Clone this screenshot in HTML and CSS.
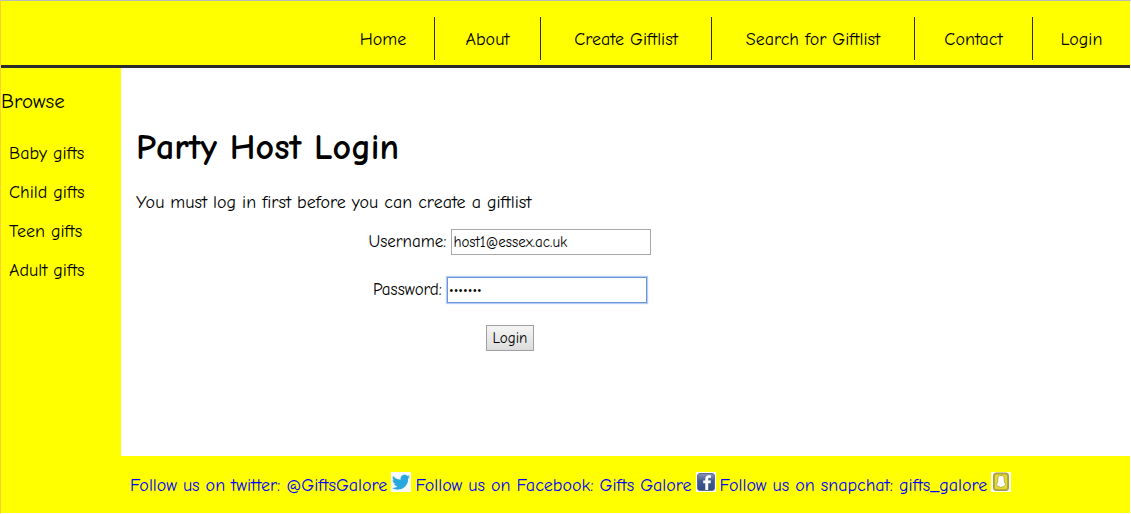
FILE: index.html
```html
<!DOCTYPE html>
<html lang="en">
<head>
<meta charset="utf-8">
<title>Party Host Login</title>
<link rel="stylesheet" href="styles.css">
</head>
<body>
<div class="page">
  <header class="header">
    <nav class="nav">
      <a class="nav-link" href="#">Home</a>
      <a class="nav-link about" href="#">About</a>
      <a class="nav-link create" href="#">Create Giftlist</a>
      <a class="nav-link search" href="#">Search for Giftlist</a>
      <a class="nav-link contact" href="#">Contact</a>
      <a class="nav-link login" href="#">Login</a>
    </nav>
  </header>
  <div class="body">
    <aside class="sidebar">
      <h2 class="sidebar-title">Browse</h2>
      <nav class="categories">
        <a class="category" href="#">Baby gifts</a>
        <a class="category" href="#">Child gifts</a>
        <a class="category" href="#">Teen gifts</a>
        <a class="category" href="#">Adult gifts</a>
      </nav>
    </aside>
    <div class="column">
      <main class="main">
        <h1 class="title">Party Host Login</h1>
        <p class="intro">You must log in first before you can create a giftlist</p>
        <form class="form">
          <div class="field">
            <label for="username">Username:</label>
            <input class="input" id="username" type="text" value="host1@essex.ac.uk">
          </div>
          <div class="field">
            <label for="password">Password:</label>
            <input class="input input-active" id="password" type="password" value="giftbox">
          </div>
          <button class="submit" type="button">Login</button>
        </form>
      </main>
      <footer class="footer">
        <a class="social" href="#">Follow us on twitter: @GiftsGalore</a>
        <svg class="icon" viewBox="0 0 20 20" aria-hidden="true">
          <rect width="20" height="20" fill="#f7f9fa"/>
          <path fill="#27a9e0" d="M2 4c2 2.300 4.500 3.500 7.600 3.700C9.200 5 11 2.800 13.500 2.800c1.200 0 2.100.5 2.800 1.200l2.300-.9-1.400 2 1.900-.5-1.900 2c.2 6-4.200 11-10.200 11-2.200 0-4.200-.6-5.800-1.700 2 .2 4-.4 5.300-1.600-1.700 0-3-1-3.500-2.500h1.600C2.800 11.300 1.600 9.900 1.600 8l1.700.5C1.700 7.300 1.200 5.600 2 4z"/>
        </svg>
        <a class="social" href="#">Follow us on Facebook: Gifts Galore</a>
        <svg class="icon" viewBox="0 0 20 20" aria-hidden="true">
          <defs><linearGradient id="fb" x1="0" y1="0" x2="0" y2="1"><stop offset="0" stop-color="#8995b4"/><stop offset=".45" stop-color="#42598f"/><stop offset="1" stop-color="#314c88"/></linearGradient></defs>
          <rect width="20" height="20" fill="#fff"/>
          <rect x="1.500" y="1.500" width="17" height="17" rx="2.500" fill="url(#fb)" stroke="#5a6c96"/>
          <path fill="#fff" d="M9.300 18v-6.800H7.200V8.600h2.100V7c0-2.500 1.300-3.700 3.500-3.700.9 0 1.600.1 2.200.2v2.300h-1.300c-1.200 0-1.500.5-1.500 1.300v1.500H15l-.4 2.600h-2.400V18z"/>
        </svg>
        <a class="social" href="#">Follow us on snapchat: gifts_galore</a>
        <svg class="icon" viewBox="0 0 20 20" aria-hidden="true">
          <rect width="20" height="20" fill="#fffef0"/>
          <rect x="2.500" y="1" width="15" height="17.500" rx="2.500" fill="#b5aa35" stroke="#a39d55"/>
          <rect x="4" y="2.500" width="12" height="14.500" rx="1.500" fill="#e3da2a"/>
          <path fill="#fff" stroke="#8f8a38" stroke-width=".6" d="M10 3.500c2.200 0 3.200 1.500 3.200 3.400 0 2.600.2 4.300 1.600 5.600-.1.800-1 1-1.400 1.400-.2.700-1.200.5-1.700.7-.5.300-.9.900-1.700.9s-1.200-.6-1.700-.9c-.5-.2-1.500 0-1.700-.7-.4-.4-1.300-.6-1.400-1.400 1.400-1.300 1.600-3 1.600-5.600 0-1.900 1-3.400 3.200-3.400z"/>
        </svg>
      </footer>
    </div>
  </div>
</div>
</body>
</html>
```
FILE: styles.css
```css
* {
  box-sizing: border-box;
}

body {
  margin: 0;
  background: #fff;
  color: #000;
  font: 18px/24px "Comic Sans MS", "Comic Neue", "Noto Sans", sans-serif;
}

a {
  color: inherit;
  text-decoration: none;
}

.page {
  display: flex;
  flex-direction: column;
  min-height: 100vh;
  border: 1px solid #fff;
  border-top-color: #b9b9b9;
  border-left-color: #f5cf3c;
}

.header {
  padding: 16px 0 5px;
  background: #ff0;
  border-bottom: 3px solid #2b2b2b;
}

.nav {
  display: flex;
  justify-content: flex-end;
}

.nav-link {
  height: 43px;
  padding: 11px 0 8px;
  border-left: 1px solid #2b2b2b;
  text-align: center;
  white-space: nowrap;
}

.nav-link:first-child {
  width: 102px;
  border-left: 0;
}

.about {
  width: 106px;
}

.create {
  width: 171px;
}

.search {
  width: 203px;
}

.contact {
  width: 118px;
}

.login {
  width: 98px;
}

.body {
  display: flex;
  flex: 1;
}

.sidebar {
  width: 120px;
  flex: none;
  padding-top: 20px;
  background: #ff0;
}

.sidebar-title {
  margin: 0;
  font-size: 21px;
  font-weight: 400;
  line-height: 26px;
}

.categories {
  display: grid;
  gap: 15px;
  padding: 28px 8px;
}

.column {
  display: flex;
  flex: 1;
  flex-direction: column;
}

.main {
  flex: 1;
  padding: 56px 15px 0;
}

.title {
  margin: 0;
  font-size: 36px;
  line-height: 48px;
}

.intro {
  margin: 19px 0 14px;
}

.form {
  display: flex;
  flex-direction: column;
  align-items: center;
  gap: 22px;
  max-width: 748px;
  font-size: 17px;
}

.field {
  display: flex;
  align-items: center;
  gap: 5px;
}

.input {
  width: 200px;
  height: 26px;
  padding: 1px;
  border: 1px solid #a9a9a9;
  font: 15px "Comic Sans MS", "Comic Neue", "Noto Sans", sans-serif;
}

.input-active {
  border-color: #6b95dd;
  box-shadow: 0 0 1px 1px #b5cdf5;
}

.submit {
  height: 26px;
  padding: 0 6px;
  border: 1px solid #a0a0a0;
  background: linear-gradient(#f5f5f5, #dcdcdc);
  color: #000;
  font: 15px "Comic Sans MS", "Comic Neue", "Noto Sans", sans-serif;
}

.footer {
  display: flex;
  flex-wrap: wrap;
  align-items: center;
  gap: 4px;
  min-height: 57px;
  padding: 2px 9px 0;
  background: #ff0;
}

.social {
  color: #00f;
}

.icon {
  width: 20px;
  height: 20px;
  margin-bottom: 8px;
}
```
